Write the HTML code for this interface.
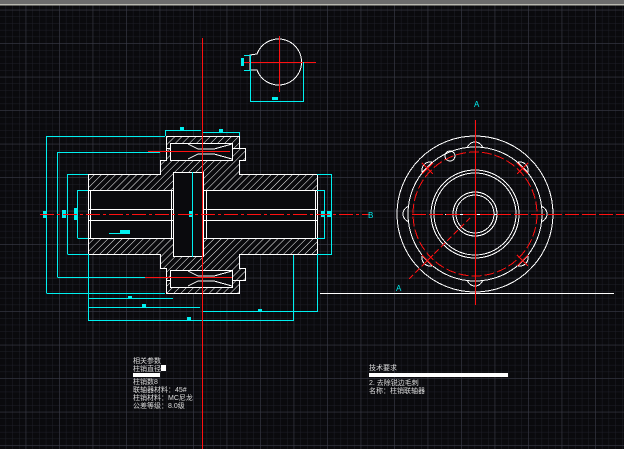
<!DOCTYPE html>
<html><head><meta charset="utf-8"><style>
html,body{margin:0;padding:0;background:#0a0a0d;overflow:hidden}
svg{display:block}
text{font-family:"Liberation Sans","Noto Sans CJK SC",sans-serif;font-size:7px;fill:#ddd}
</style></head><body>
<svg width="624" height="449" viewBox="0 0 624 449" xmlns="http://www.w3.org/2000/svg" shape-rendering="crispEdges">
<defs>
<pattern id="minor" x="25.7" y="43.3" width="6.7" height="6.7" patternUnits="userSpaceOnUse">
<path d="M0 0H6.7M0 0V6.7" stroke="#1f2029" stroke-width="1" fill="none"/></pattern>
<pattern id="major" x="25.7" y="43.3" width="33.5" height="33.5" patternUnits="userSpaceOnUse">
<path d="M0 0H33.5M0 0V33.5" stroke="#3c3e4a" stroke-width="1" fill="none"/></pattern>
<pattern id="hatch" width="5" height="5" patternUnits="userSpaceOnUse" patternTransform="rotate(45)">
<rect width="5" height="5" fill="#0a0a0d"/><path d="M0 0V5" stroke="#fff" stroke-width="1.2"/></pattern>
<clipPath id="outside"><path d="M380 120H580V310H380Z M475 147A67 67 0 1 0 475.01 147Z" clip-rule="evenodd"/></clipPath>
</defs>
<rect width="624" height="449" fill="#0a0a0d"/>
<rect y="5" width="624" height="444" fill="url(#minor)"/>
<rect y="5" width="624" height="444" fill="url(#major)"/>
<rect width="624" height="4" fill="#6c6c6c"/>
<rect y="4" width="624" height="1.5" fill="#b8b8b0"/>

<g fill="none" stroke-width="1">
<path d="M88.5 174.5H160.5V160.5H166.5V148.5H245.5V160.5H239.5V174.5H317.5V190.5H88.5Z" fill="url(#hatch)" stroke="#fff"/>
<path d="M88.5 254.5H160.5V268.5H166.5V280.5H245.5V268.5H239.5V254.5H317.5V238.5H88.5Z" fill="url(#hatch)" stroke="#fff"/>
<rect x="166.5" y="136.5" width="73" height="12" fill="url(#hatch)" stroke="#fff"/>
<rect x="166.5" y="280.5" width="73" height="13" fill="url(#hatch)" stroke="#fff"/>
<rect x="173.5" y="172.5" width="30" height="84" fill="#0a0a0d" stroke="#fff"/>
<g stroke="#fff">
<rect x="88.5" y="190.5" width="85" height="48" fill="#0a0a0d"/>
<rect x="203.5" y="190.5" width="114" height="48" fill="#0a0a0d"/>
<path d="M88 209.5H173M88 220.5H173M203 209.5H317M203 220.5H317M90.5 190V238M171.5 190V238M206.5 190V238M315.5 190V238"/>
<rect x="170.5" y="143.5" width="62" height="17" fill="#0a0a0d"/>
<rect x="170.5" y="270.5" width="62" height="17" fill="#0a0a0d"/>
<path d="M188 144L198 149H214L232 144M188 159L198 154H214L232 159M188 286L198 281H214L232 286M188 271L198 276H214L232 271"/>
</g>
<g stroke="#00f0f0">
<path d="M46.5 136.5H165M46.5 136V293M46.5 293.5H165M57.5 152.5H160M57.5 152V277M57.5 277.5H160M67.5 174.5H88M67.5 174V254M67.5 254.5H88M77.5 190.5H88M77.5 190V238M77.5 238.5H88"/>
<path d="M165.5 130.5H201M165.5 130V136M203 132.5H239.5V136M317 174.5H331.5V254.5H317M317 190.5H324.5V238.5H317"/>
<path d="M88 298.5H173M88 307.5H200M88 320.5H293.5V255M203 311.5H317.5V254M192.5 172V257M88.5 254V320"/>
<path d="M109 233.5H129"/>
</g>
<g fill="#00f0f0">
<rect x="43" y="211" width="4" height="7"/><rect x="62" y="210" width="4" height="8"/><rect x="74" y="208" width="3" height="12"/>
<rect x="189" y="211" width="4" height="6"/><rect x="321" y="211" width="4" height="6"/><rect x="327" y="211" width="4" height="6"/>
<rect x="180" y="127" width="4" height="3"/><rect x="219" y="129" width="4" height="3"/>
<rect x="128" y="296" width="4" height="3"/><rect x="142" y="304" width="4" height="3"/><rect x="187" y="317" width="4" height="3"/><rect x="258" y="309" width="4" height="3"/>
<rect x="120" y="230" width="10" height="4"/>
</g>
<g stroke="#ff1010">
<path d="M40 214.5H370" stroke-dasharray="14 3 3 3"/>
<path d="M202.5 38V449"/>
<path d="M148 151.5H230M145 277.5H232"/>
</g>
<path d="M320 293.5H614" stroke="#fff"/>

<path d="M257 54A23 23 0 1 1 257 70H250V55Z" stroke="#fff"/>
<path d="M241 62.5H316M279.5 36V92" stroke="#ff1010"/>
<path d="M244 55.5H250.5V70.5H244M250.5 70V101.5H303.5V62" stroke="#00f0f0"/>
<rect x="241" y="58" width="3" height="8" fill="#00f0f0"/>
<rect x="272" y="97" width="6" height="3" fill="#00f0f0"/>

<g stroke="#fff">
<circle cx="475" cy="214" r="78"/>
<circle cx="475" cy="214" r="67"/>
<circle cx="475" cy="214" r="44"/>
<circle cx="475" cy="214" r="41"/>
<circle cx="475" cy="214" r="22"/>
<circle cx="475" cy="214" r="19"/>
<g clip-path="url(#outside)">
<circle cx="475" cy="150" r="8"/><circle cx="475" cy="278" r="8"/>
<circle cx="411" cy="214" r="8"/><circle cx="539" cy="214" r="8"/>
<circle cx="430" cy="170" r="8"/><circle cx="520" cy="170" r="8"/>
<circle cx="430" cy="258" r="8"/><circle cx="520" cy="258" r="8"/>
</g>
<circle cx="450" cy="156" r="5"/>
<path d="M445 214.5H505"/>
</g>
<g stroke="#ff1010">
<circle cx="475" cy="214" r="62" stroke-dasharray="10 3" fill="none"/>
<path d="M412 214.5H624" stroke-dasharray="14 3"/>
<path d="M475.5 120V305"/>
<path d="M409 279L470 218" stroke-dasharray="6 3"/>
<path d="M422 163L433 174M433 163L422 174M517 163L528 174M528 163L517 174M422 255L433 266M433 255L422 266M517 255L528 266M528 255L517 266"/>
</g>
</g>
<text x="474" y="107" style="fill:#00f0f0;font-size:8px">A</text>
<text x="396" y="291" style="fill:#00f0f0;font-size:8px">A</text>
<text x="368" y="218" style="fill:#00f0f0;font-size:8px">B</text>

<text x="133" y="363">相关参数</text>
<text x="133" y="371">柱销直径</text>
<rect x="161" y="365" width="5" height="6" fill="#fff"/>
<rect x="133" y="373" width="27" height="4" fill="#fff"/>
<text x="133" y="384">柱销数8</text>
<text x="133" y="392">联轴器材料：45#</text>
<text x="133" y="400">柱销材料：MC尼龙</text>
<text x="133" y="408">公差等级：8.0级</text>
<text x="369" y="370">技术要求</text>
<rect x="369" y="373" width="139" height="4" fill="#fff"/>
<text x="369" y="385">2. 去除锐边毛刺</text>
<text x="369" y="393">名称：柱销联轴器</text>
</svg>
</body></html>
